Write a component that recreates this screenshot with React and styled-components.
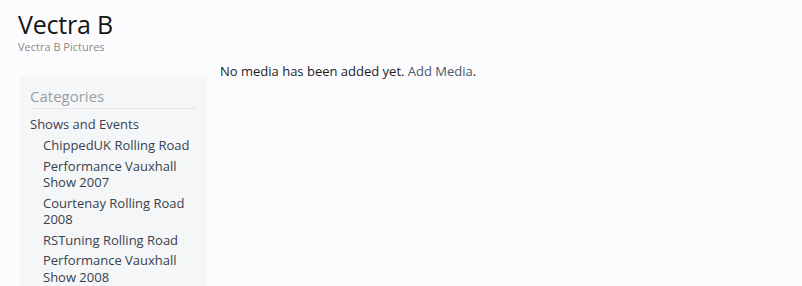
import React from 'react'
import styled, { createGlobalStyle } from 'styled-components'

const GlobalStyle = createGlobalStyle`
    html, body {
        margin: 0;
        padding: 0;
        background: #fcfcfe;
        font-family: "Open Sans", "Noto Sans", sans-serif;
    }
`

const categories = [
    { name: 'ChippedUK Rolling Road' },
    { name: 'Performance Vauxhall Show 2007' },
    { name: 'Courtenay Rolling Road 2008' },
    { name: 'RSTuning Rolling Road' },
    { name: 'Performance Vauxhall Show 2008' },
]

function App() {
    return (
        <Page>
            <GlobalStyle />
            <Header>
                <Title>Vectra B</Title>
                <SubTitle>Vectra B Pictures</SubTitle>
            </Header>
            <Body>
                <Sidebar>
                    <SidebarHeading>Categories</SidebarHeading>
                    <CategoryList>
                        <CategoryItem>
                            <CategoryLink>Shows and Events</CategoryLink>
                            <SubList>
                                {categories.map((c) => (
                                    <SubItem key={c.name}>
                                        <CategoryLink>{c.name}</CategoryLink>
                                    </SubItem>
                                ))}
                            </SubList>
                        </CategoryItem>
                    </CategoryList>
                </Sidebar>
                <Main>
                    No media has been added yet. <AddLink href="#">Add Media</AddLink>.
                </Main>
            </Body>
        </Page>
    )
}

export default App

const Page = styled.div`
    height: 286px;
    overflow: hidden;
`

const Header = styled.header`
    padding: 8px 0 0 18px;
`

const Title = styled.h1`
    margin: 0;
    font-size: 25px;
    font-weight: 400;
    line-height: 32px;
    color: #161616;
    letter-spacing: -0.2px;
`

const SubTitle = styled.div`
    font-size: 11px;
    line-height: 14px;
    color: #8a8a8a;
`

const Body = styled.div`
    display: flex;
    align-items: flex-start;
    padding: 9px 0 0 20px;
    gap: 13px;
`

const Sidebar = styled.aside`
    width: 167px;
    flex-shrink: 0;
    background: #f5f6f8;
    border-radius: 3px;
    padding: 10px 10px 20px 10px;
    margin-top: 13px;
`

const SidebarHeading = styled.h3`
    margin: 0;
    font-size: 15px;
    font-weight: 400;
    color: #9a9ea3;
    line-height: 20px;
    padding-bottom: 2px;
    border-bottom: 1px solid #e4e6e9;
`

const CategoryList = styled.ul`
    list-style: none;
    margin: 7px 0 0 0;
    padding: 0;
`

const CategoryItem = styled.li`
    font-size: 13px;
    line-height: 16.5px;
`

const SubList = styled.ul`
    list-style: none;
    margin: 4.5px 0 0 0;
    padding: 0 0 0 13px;
`

const SubItem = styled.li`
    margin-bottom: 4px;
`

const CategoryLink = styled.span`
    color: #38424e;
    cursor: pointer;
`

const Main = styled.main`
    font-size: 13px;
    line-height: 17px;
    color: #1c1c1c;
`

const AddLink = styled.a`
    color: #4a5868;
    text-decoration: none;
`
